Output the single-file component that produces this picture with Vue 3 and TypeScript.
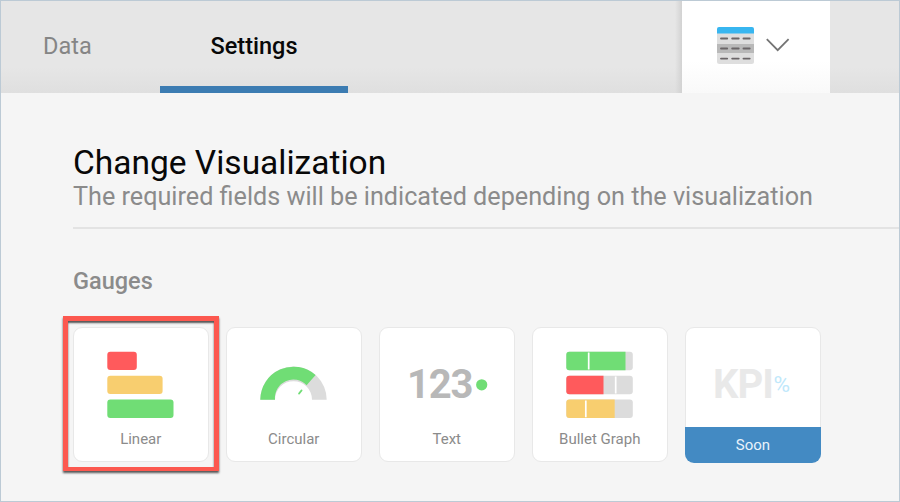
<script setup lang="ts">
type Kind = 'linear' | 'circular' | 'text' | 'bullet' | 'kpi'

interface Gauge {
  kind: Kind
  label: string
  selected?: boolean
  soon?: boolean
}

const gauges: Gauge[] = [
  { kind: 'linear', label: 'Linear', selected: true },
  { kind: 'circular', label: 'Circular' },
  { kind: 'text', label: 'Text' },
  { kind: 'bullet', label: 'Bullet Graph' },
  { kind: 'kpi', label: 'Soon', soon: true },
]
</script>

<template>
  <div class="panel">
    <header class="bar">
      <nav class="tabs">
        <a class="tab tab-data"><span>Data</span></a>
        <a class="tab active"><span>Settings</span></a>
      </nav>
      <button class="picker" type="button">
        <svg class="grid-icon" width="37" height="37" viewBox="0 0 37 37">
          <path d="M0 6H37V34.5Q37 37 34.5 37H2.5Q0 37 0 34.5Z" fill="#dedede" />
          <path d="M0 6.5V2Q0 0 2 0H35Q37 0 37 2V6.5Z" fill="#38b6f0" />
          <rect y="17" width="37" height="9" fill="#b9b9b9" />
          <g stroke="#6b6668" stroke-width="1.9" stroke-linecap="round">
            <path d="M4 11.5H10.2M15.2 11.5H21.7M26.5 11.5H32.7M4 21.5H10.2M15.2 21.5H21.7M26.5 21.5H32.7M4 31.6H10.2M15.2 31.6H21.7M26.5 31.6H32.7" />
          </g>
        </svg>
        <svg class="chevron" width="24" height="14" viewBox="0 0 24 14">
          <path d="M0.8 1.2L11.7 12.2L22.6 1.2" fill="none" stroke="#747474" stroke-width="1.8" />
        </svg>
      </button>
    </header>

    <main class="content">
      <h1>Change Visualization</h1>
      <p class="hint">The required fields will be indicated depending on the visualization</p>
      <h2>Gauges</h2>

      <div class="cards">
        <div v-for="g in gauges" :key="g.kind" class="card" :class="{ selected: g.selected, soon: g.soon }">
          <svg v-if="g.kind === 'linear'" class="art" width="134" height="98" viewBox="0 0 134 98">
            <rect x="33.3" y="23.8" width="29.5" height="18.3" rx="3" fill="#ff5a5c" />
            <rect x="33.3" y="47.8" width="55.3" height="18.3" rx="3" fill="#f8ce6f" />
            <rect x="33.3" y="71.6" width="66.2" height="18.3" rx="3" fill="#70dd75" />
          </svg>
          <svg v-else-if="g.kind === 'circular'" class="art" width="134" height="98" viewBox="0 0 134 98">
            <path d="M33.3 71.7A33.2 33.2 0 0 1 99.7 71.7H85A18.4 18.4 0 0 0 48 71.7Z" fill="#dcdcdc" />
            <path d="M33.3 71.7A33.2 33.2 0 0 1 88.6 47.1L79.6 57.2A18.4 18.4 0 0 0 48 71.7Z" fill="#70dd75" />
            <path d="M72 65.6L74.6 62.4" stroke="#70dd75" stroke-width="1.7" stroke-linecap="round" />
          </svg>
          <svg v-else-if="g.kind === 'text'" class="art" width="134" height="98" viewBox="0 0 134 98">
            <text x="27" y="70.4" class="digits" textLength="66.5">123</text>
            <circle cx="101.7" cy="56.8" r="5.6" fill="#70dd75" />
          </svg>
          <svg v-else-if="g.kind === 'bullet'" class="art" width="134" height="98" viewBox="0 0 134 98">
            <rect x="33.3" y="23.8" width="66.5" height="18.4" rx="3" fill="#dcdcdc" />
            <rect x="33.3" y="47.8" width="66.5" height="18.4" rx="3" fill="#dcdcdc" />
            <rect x="33.3" y="71.6" width="66.5" height="18.4" rx="3" fill="#dcdcdc" />
            <path d="M92.5 23.8V42.2H36.3Q33.3 42.2 33.3 39.2V26.8Q33.3 23.8 36.3 23.8Z" fill="#70dd75" />
            <path d="M70.5 47.8V66.2H36.3Q33.3 66.2 33.3 63.2V50.8Q33.3 47.8 36.3 47.8Z" fill="#ff5a5c" />
            <path d="M81.7 71.6V90H36.3Q33.3 90 33.3 87V74.6Q33.3 71.6 36.3 71.6Z" fill="#f8ce6f" />
            <path d="M55.7 24.5V41.5M82.7 48.5V65.5M52.8 72.4V89.2" stroke="#fff" stroke-width="1.7" />
          </svg>
          <svg v-else class="art" width="134" height="98" viewBox="0 0 134 98">
            <text x="27" y="70.2" class="kpi" textLength="61">KPI</text>
            <text x="87.4" y="64" class="percent" textLength="16.6" lengthAdjust="spacingAndGlyphs">%</text>
          </svg>
          <span class="label">{{ g.label }}</span>
        </div>
      </div>
    </main>
  </div>
</template>

<style>
body {
  margin: 0;
}
</style>

<style scoped>
.panel {
  box-sizing: border-box;
  width: 900px;
  height: 502px;
  overflow: hidden;
  border: 1px solid #bccad5;
  background: #f5f5f5;
  font-family: Roboto, "Liberation Sans", sans-serif;
}
.bar {
  display: flex;
  height: 92px;
  background: linear-gradient(#e6e6e6 72%, #dfdfdf);
}
.tabs {
  display: flex;
  width: 681px;
  background: linear-gradient(to right, transparent 674px, #d2d2d2);
}
.tab {
  box-sizing: border-box;
  display: flex;
  justify-content: center;
  padding-top: 30px;
  width: 188px;
  font-size: 23.5px;
  line-height: 30px;
  color: #858585;
}
.tab-data {
  justify-content: flex-start;
  width: 159px;
  padding-left: 42px;
}
.tab.active {
  border-bottom: 7px solid #3c7cb2;
  font-weight: 500;
  color: #080808;
}
.picker {
  display: flex;
  align-items: flex-start;
  gap: 12px;
  width: 148px;
  padding: 26px 0 0 35px;
  border: 0;
  background: linear-gradient(#fff 65%, #f9f9f9);
}
.grid-icon {
  flex: none;
}
.chevron {
  flex: none;
  margin-top: 11px;
}
.content {
  padding: 50px 0 0 72px;
}
h1 {
  margin: 0;
  font-size: 33.5px;
  font-weight: 400;
  line-height: 40px;
  color: #080808;
  white-space: nowrap;
}
.hint {
  box-sizing: border-box;
  height: 46px;
  margin: 0;
  border-bottom: 2px solid #e3e3e3;
  font-size: 25.2px;
  line-height: 28px;
  color: #8b8b8b;
  white-space: nowrap;
}
h2 {
  margin: 37px 0 0;
  font-size: 23.5px;
  font-weight: 500;
  line-height: 30px;
  color: #8b8b8b;
}
.cards {
  display: flex;
  gap: 17.5px;
  margin-top: 31px;
}
.card {
  position: relative;
  box-sizing: border-box;
  display: flex;
  flex-direction: column;
  width: 135.5px;
  height: 135px;
  border: 1px solid #e8e8e8;
  border-radius: 9px;
  background: #fff;
}
.art {
  display: block;
  flex: none;
}
.label {
  margin-top: 3px;
  font-size: 15px;
  line-height: 20px;
  color: #8b8b8b;
  text-align: center;
}
.selected::after {
  content: "";
  position: absolute;
  inset: -12px -11px -10px;
  border: 5px solid #fc584f;
  border-bottom-width: 4px;
  box-shadow: 0 2px 2px #555, inset 0 2px 2px #555;
}
.soon .label {
  flex: none;
  margin: 1px -1.5px 0 -1px;
  height: 36px;
  border-radius: 0 0 9px 9px;
  background: #438ac3;
  line-height: 36px;
  color: #e9f3fb;
}
.digits,
.kpi {
  font-size: 40px;
  font-weight: 700;
  fill: #b8b8b8;
}
.kpi {
  fill: #e9e9e9;
}
.percent {
  font-size: 21.5px;
  fill: #bfe8fb;
}
</style>
